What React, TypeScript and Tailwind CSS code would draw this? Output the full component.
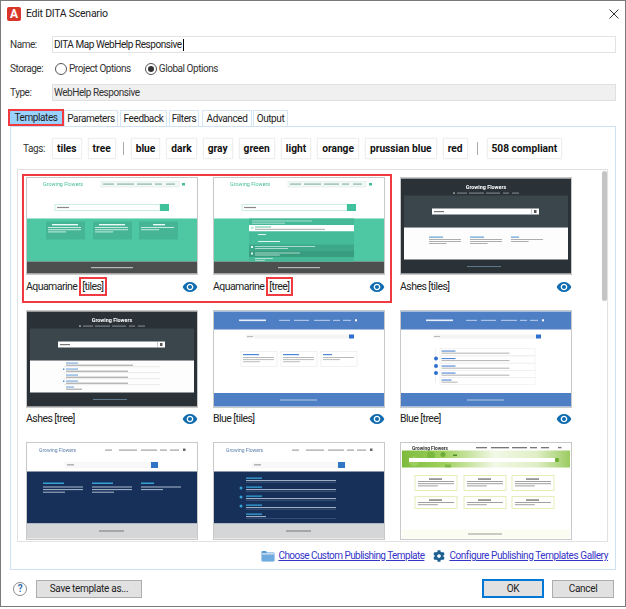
import React from 'react';
import { FaCog } from 'react-icons/fa';
import { MdVisibility } from 'react-icons/md';

const FONT = 'Roboto, "Noto Sans", sans-serif';

// tiny text lines of a page preview
function Lines({ x, y, w, n, fill, step = 2.6, o = 0.8 }: { x: number; y: number; w: number; n: number; fill: string; step?: number; o?: number }) {
  return (
    <>
      {Array.from({ length: n }).map((_, i) => (
        <rect key={i} x={x} y={y + i * step} width={i === n - 1 && n > 1 ? w * 0.55 : w} height={1} fill={fill} opacity={o} />
      ))}
    </>
  );
}

function Logo({ x, y, fill, anchor = 'start', bold = false, size = 5.4 }: { x: number; y: number; fill: string; anchor?: 'start' | 'middle'; bold?: boolean; size?: number }) {
  return (
    <text x={x} y={y} fill={fill} fontSize={size} fontWeight={bold ? 700 : 400} textAnchor={anchor} fontFamily={FONT}>
      Growing Flowers
    </text>
  );
}

function NavDots({ xs, y, fill, o = 0.7 }: { xs: [number, number][]; y: number; fill: string; o?: number }) {
  return (
    <>
      {xs.map(([x, w], i) => (
        <rect key={i} x={x} y={y} width={w} height={1.2} fill={fill} opacity={o} />
      ))}
    </>
  );
}

const NAV_A: [number, number][] = [[76, 11], [90, 17], [110, 15], [128, 7], [139, 9]];
const NAV_P: [number, number][] = [[78, 7], [92, 18], [114, 16], [133, 7], [143, 9]];

function Aqua({ tree }: { tree?: boolean }) {
  return (
    <>
      <rect width="170" height="95" fill="#fff" />
      <Logo x={16} y={7.5} fill="#45bd98" />
      <rect x="74" y="3" width="78" height="5.5" fill="#f2f8f6" stroke="#cfe0da" strokeWidth="0.4" />
      <NavDots xs={NAV_A} y={5} fill="#5f9a88" />
      <rect x="155" y="4.5" width="3" height="2.5" fill="#45bd98" />
      <rect x="28" y="26" width="105" height="6" fill="#fff" stroke="#bfe9db" strokeWidth="0.8" />
      <rect x="30" y="28.4" width="12" height="1.2" fill="#888" />
      <rect x="133" y="25.5" width="9" height="7" fill="#3fc29b" />
      <rect y="40" width="170" height="43" fill="#4dc8a3" />
      <rect y="83" width="170" height="12" fill="#4c4f4e" />
      <rect x="64" y="88.5" width="42" height="1.2" fill="#cfd8d5" opacity="0.8" />
      {tree ? (
        <>
          <rect x="35" y="40" width="105" height="43" fill="#46b998" />
          <Lines x={38} y={42} w={60} n={2} fill="#d8f2e9" step={2.2} o={0.7} />
          <rect x="35" y="46.5" width="105" height="6.5" fill="#fff" />
          <rect x="37" y="48" width="2.5" height="2.5" fill="#bfe9db" />
          <rect x="41" y="48" width="16" height="1" fill="#5fc7a8" />
          <rect x="41" y="50.3" width="70" height="1" fill="#888" opacity="0.7" />
          <rect x="35" y="53" width="105" height="7" fill="#45bb99" />
          <rect x="44" y="55.5" width="8" height="1" fill="#e0f5ee" />
          <rect x="35" y="60" width="105" height="6.5" fill="#45bb99" />
          <rect x="44" y="62.5" width="22" height="1" fill="#e0f5ee" />
          <rect x="35" y="66" width="105" height="6.5" fill="#3ea98a" />
          <rect x="37" y="67.5" width="2" height="2" fill="#e0f5ee" />
          <Lines x={41} y={67.5} w={60} n={2} fill="#d8f2e9" step={2} o={0.7} />
          <rect x="35" y="72.5" width="105" height="6" fill="#389c7f" />
          <rect x="37" y="74" width="2" height="2" fill="#e0f5ee" />
          <Lines x={41} y={74} w={45} n={2} fill="#d8f2e9" step={2} o={0.7} />
          <Lines x={41} y={79.5} w={18} n={2} fill="#d8f2e9" step={1.8} o={0.7} />
        </>
      ) : (
        [19, 66, 112].map((x, i) => (
          <g key={x}>
            <rect x={x} y="43" width="39" height="18" fill="#45b595" />
            <rect x={x + 6 + (i === 2 ? 8 : 0)} y="45.5" width={i === 2 ? 12 : 26} height="1.4" fill="#eafaf5" />
            <Lines x={x + 2} y={48.5} w={33} n={i === 2 ? 2 : 3} fill="#e6f7f1" step={2.2} />
          </g>
        ))
      )}
    </>
  );
}

function Ashes({ tree }: { tree?: boolean }) {
  return (
    <>
      <rect width="170" height="95" fill="#2a3238" />
      <Logo x={85} y={10} fill="#fff" anchor="middle" bold />
      <rect x="52" y="14" width="2" height="1.2" fill="#bbb" />
      <NavDots xs={[[56, 10], [68, 15], [85, 14], [102, 6], [111, 7]]} y={14} fill="#aeb6bb" o={0.6} />
      <rect x="3" y="17" width="164" height="32" fill="#3a454c" />
      <rect x="31" y="30" width="107" height="6" fill="#fff" />
      <rect x="33" y="32.5" width="10" height="1.2" fill="#777" />
      <rect x="130" y="30" width="0.5" height="6" fill="#999" />
      <rect x="133" y="31.5" width="2.5" height="3" fill="#555" />
      <rect x="3" y="49" width="164" height="32" fill="#fdfdfd" />
      <rect x="66" y="87.5" width="34" height="1" fill="#6a8aa0" opacity="0.8" />
      {tree ? (
        <>
          {[51, 57, 63, 69, 75].map((y, i) => (
            <g key={y}>
              <rect x="39" y={y} width={i === 4 ? 8 : 12} height="1.1" fill="#70a5d8" />
              <rect x="39" y={y + 2.2} width={i === 4 ? 16 : 62 + (i === 0 ? 5 : 0)} height="1" fill="#999" />
              {i < 4 && <rect x="37" y={y + 4} width="96" height="0.6" fill="#ddd" />}
              {(i === 1 || i === 3) && <rect x="36" y={y} width="1.4" height="1.4" fill="#3d85c6" />}
            </g>
          ))}
        </>
      ) : (
        [28, 69, 110].map((x, i) => (
          <g key={x}>
            <rect x={x} y="58" width={i === 2 ? 8 : 14} height="1.3" fill="#70a5d8" />
            <Lines x={x} y={60.5} w={32} n={i === 2 ? 2 : 3} fill="#999" step={2} />
          </g>
        ))
      )}
    </>
  );
}

function Blue({ tree }: { tree?: boolean }) {
  return (
    <>
      <rect width="170" height="95" fill="#fff" />
      <rect width="170" height="18" fill="#4e7fc4" />
      <rect y="81.5" width="170" height="13.5" fill="#4e7fc4" />
      <rect x="25" y="8" width="27" height="1.6" fill="#e6eefa" />
      <NavDots xs={[[65, 11], [80, 15], [100, 16], [119, 7], [129, 8]]} y={8.3} fill="#d0def3" />
      <rect x="141" y="7.8" width="2" height="2" fill="#fff" />
      <rect x="32" y="23" width="105" height="4" fill="#f4f4f4" />
      <rect x="33" y="24.5" width="6" height="1" fill="#bbb" />
      <rect x="135" y="23" width="5" height="4" fill="#2f6fd0" />
      <rect x="66" y="88" width="37" height="1" fill="#d0def3" opacity="0.8" />
      {tree ? (
        <>
          <rect x="34" y="37" width="0.6" height="34" fill="#e4e4e4" />
          {[37, 44.5, 52, 59, 66].map((y, i) => (
            <g key={y}>
              <rect x="39" y={y} width="95" height="7" fill="#fff" stroke="#e8e8e8" strokeWidth="0.5" />
              <rect x="40.5" y={y + 2} width={i === 4 ? 10 : 14} height="1.1" fill="#4f86d8" />
              <rect x="40.5" y={y + 4.2} width={i === 4 ? 16 : 68} height="0.9" fill="#aaa" />
              {(i === 1 || i === 3) && <circle cx="35" cy={y + 2.5} r="2" fill="#2f6fd0" />}
            </g>
          ))}
          <circle cx="35" cy="54.5" r="2" fill="#2f6fd0" />
        </>
      ) : (
        [27, 67, 107].map((x, i) => (
          <g key={x}>
            <rect x={x} y="40" width="36" height="15" fill="#fff" stroke="#e8e8e8" strokeWidth="0.6" />
            <rect x={x + 2} y="42.5" width={i === 2 ? 9 : 16} height="1.2" fill="#4f86d8" />
            <Lines x={x + 2} y={45.5} w={31} n={i === 2 ? 2 : 3} fill="#aaa" step={2.1} />
          </g>
        ))
      )}
    </>
  );
}

function Prussian({ tree }: { tree?: boolean }) {
  return (
    <>
      <rect width="170" height="95" fill="#fff" />
      <Logo x={12} y={8.5} fill="#5f80ad" size={5} />
      <NavDots xs={NAV_P} y={6} fill="#777" />
      <rect x="156" y="5" width="2.5" height="2.5" fill="#666" />
      <rect x="38" y="19" width="87" height="5" fill="#f8f8f8" stroke="#eee" strokeWidth="0.4" />
      <rect x="40" y="20.8" width="7" height="1.1" fill="#999" />
      <rect x="124" y="18.5" width="7" height="6" fill="#2f77c4" />
      <rect y="28" width="170" height="52" fill="#16305a" />
      <rect y="80" width="170" height="15" fill="#d5d6d8" />
      <rect x="72" y="87" width="25" height="1" fill="#777" />
      {tree ? (
        <>
          {[34, 43, 52, 61, 70].map((y, i) => (
            <g key={y}>
              <rect x="32" y={y} width="16" height="1.3" fill="#35a2d6" />
              <rect x="32" y={y + 2.5} width={i === 4 ? 20 : 90} height="1.1" fill="#c5d0de" opacity="0.8" />
              <rect x="32" y={y + 5} width="90" height="0.5" fill="#51688a" />
              {i > 0 && i < 4 && <circle cx="27" cy={y + 1.5} r="1.5" fill="#35a2d6" />}
            </g>
          ))}
        </>
      ) : (
        [16, 65, 114].map((x, i) => (
          <g key={x}>
            <rect x={x} y="39" width={i === 2 ? 13 : 21} height="1.5" fill="#35a2d6" />
            <Lines x={x} y={43} w={40} n={i === 2 ? 2 : 3} fill="#d5dde8" step={2.6} />
          </g>
        ))
      )}
    </>
  );
}

function Green() {
  return (
    <>
      <defs>
        <linearGradient id="band" x1="0" x2="1" y1="0" y2="0">
          <stop offset="0" stopColor="#7dbb3c" />
          <stop offset="0.25" stopColor="#9fd05e" />
          <stop offset="0.55" stopColor="#f2f8e6" />
          <stop offset="0.8" stopColor="#e0efc6" />
          <stop offset="1" stopColor="#9ccb62" />
        </linearGradient>
      </defs>
      <rect width="170" height="95" fill="#fff" />
      <Logo x={11} y={6} fill="#333" bold size={4.8} />
      <NavDots xs={[[75, 11], [90, 18], [111, 15], [129, 7], [140, 8]]} y={3.6} fill="#444" o={0.8} />
      <rect x="157" y="3.4" width="3.5" height="1.4" fill="#777" />
      <rect x="1" y="7" width="168" height="17" fill="url(#band)" />
      <circle cx="30" cy="12" r="4" fill="#5fa52c" opacity="0.5" />
      <circle cx="42" cy="11" r="2.5" fill="#4d9424" opacity="0.6" />
      <circle cx="13" cy="18" r="5" fill="#a8d670" opacity="0.6" />
      <rect x="52" y="11" width="4" height="1.5" fill="#4d8c24" />
      <rect x="8" y="14.5" width="146" height="4" fill="#fff" />
      <circle cx="156" cy="16.5" r="2.2" fill="#6fae35" />
      <rect x="44" y="21" width="6" height="3" fill="#6fae35" opacity="0.7" />
      <rect x="1" y="86" width="168" height="9" fill="#fbfdf3" />
      <rect x="67" y="90" width="34" height="1" fill="#999" />
      {[[14, 32, 15], [63, 32, 15], [111, 32, 15], [14, 53, 12], [63, 53, 12], [111, 53, 12]].map(([x, y, h], i) => (
        <g key={i}>
          <rect x={x} y={y} width="42" height={h} fill="#fff" stroke="#dfe9a8" strokeWidth="0.8" />
          <rect x={x + 14} y={y + 3} width="13" height="1.1" fill="#555" />
          <Lines x={x + 3} y={y + 5.5} w={36} n={h > 12 ? 3 : 2} fill="#888" step={2.2} />
        </g>
      ))}
    </>
  );
}

function Thumb({ children }: { children: React.ReactNode }) {
  return (
    <div className="h-[96px] w-[170px] overflow-hidden outline outline-1 outline-[#c9c9c9]">
      <svg viewBox="0 0 170 95" className="block h-[96px] w-[170px] blur-[0.5px]">
        {children}
      </svg>
    </div>
  );
}

function Card({ name, tag, boxed, children, eye = true }: { name: string; tag: string; boxed?: boolean; children: React.ReactNode; eye?: boolean }) {
  return (
    <div className="w-[170px]">
      <Thumb>{children}</Thumb>
      {eye && (
        <div className="mt-[4px] flex h-[17px] items-center justify-between -ml-[1px]">
          <span className="whitespace-nowrap text-[10.5px] tracking-[-0.55px] text-[#222]">
            {name}{' '}
            {boxed ? <span className="border-2 border-[#f03a3f] px-[1px] py-[1px]">{tag}</span> : tag}
          </span>
          <MdVisibility className="mr-[-1px] text-[16px] text-[#0f6cb0]" />
        </div>
      )}
    </div>
  );
}

function Chip({ children }: { children: string }) {
  return (
    <div className="flex h-[21px] items-center whitespace-nowrap border border-[#efefef] px-[4px] text-[10.2px] font-bold text-[#111] shadow-[0_0_1px_#e5e5e5]">
      {children}
    </div>
  );
}

function Tab({ label, className }: { label: string; className: string }) {
  return (
    <div className={`${className} flex h-[16px] items-center justify-center border border-b-0 border-[#d6e6f5] bg-white text-[10px] tracking-[-0.4px] text-[#222]`}>
      {label}
    </div>
  );
}

function FolderIcon() {
  return (
    <svg width="14" height="12" viewBox="0 0 14 12">
      <path d="M0.5 2 Q0.5 1 1.5 1 H5 L6 2.5 H12.5 Q13.5 2.5 13.5 3.5 V10.5 Q13.5 11.5 12.5 11.5 H1.5 Q0.5 11.5 0.5 10.5 Z" fill="#5b9bd5" />
      <rect x="1" y="3.2" width="12" height="1.4" fill="#d6e8f7" />
      <rect x="1" y="5" width="12" height="6" fill="#6fabdf" />
    </svg>
  );
}

export default function App() {
  return (
    <div className="h-[609px] w-[626px] overflow-hidden bg-white" style={{ fontFamily: FONT }}>
      <div className="flex h-[607px] flex-col border border-[#7a7a7a] bg-white">
        {/* title bar */}
        <div className="flex h-[25px] shrink-0 items-center pl-[6px] pr-[4px]">
          <div className="flex h-[14px] w-[14px] items-center justify-center rounded-[2px] bg-[#d9362b] text-[12px] font-bold leading-none text-white">
            A
          </div>
          <span className="ml-[5px] text-[10.5px] tracking-[-0.25px] text-[#222]">Edit DITA Scenario</span>
          <svg className="ml-auto" width="10" height="10" viewBox="0 0 10 10" stroke="#333" strokeWidth="1" fill="none">
            <path d="M0.5 0.5 L9.5 9.5 M9.5 0.5 L0.5 9.5" />
          </svg>
          <span className="w-[2px]" />
        </div>

        {/* form rows */}
        <div className="flex flex-col pl-[9px] pr-[9px] text-[10px] tracking-[-0.45px] text-[#333]">
          <div className="mt-[10px] flex h-[17px] items-center">
            <span className="w-[42px]">Name:</span>
            <div className="flex h-[17px] flex-1 items-center border border-[#e3e3e3] pl-[1px] text-[#222]">
              DITA Map WebHelp Responsive
              <span className="ml-px h-[12px] w-px bg-black" />
            </div>
          </div>
          <div className="mt-[7px] flex h-[17px] items-center">
            <span className="w-[45px]">Storage:</span>
            <span className="h-[12px] w-[12px] rounded-full border border-[#555]" />
            <span className="ml-[2px]">Project Options</span>
            <span className="ml-[14px] flex h-[12px] w-[12px] items-center justify-center rounded-full border border-[#555]">
              <span className="h-[6px] w-[6px] rounded-full bg-[#333]" />
            </span>
            <span className="ml-[2px]">Global Options</span>
          </div>
          <div className="mt-[7px] flex h-[17px] items-center">
            <span className="w-[42px]">Type:</span>
            <div className="flex h-[17px] flex-1 items-center border border-[#e0e0e0] bg-[#f0f0f0] pl-[1px]">WebHelp Responsive</div>
          </div>
        </div>

        {/* tabs */}
        <div className="mt-[8px] flex items-end pl-[7px]">
          <div className="flex h-[17px] w-[56px] items-center justify-center border-2 border-[#f03a3f] bg-[#99d1ff] text-[10px] tracking-[-0.4px] text-[#222]">
            Templates
          </div>
          <Tab label="Parameters" className="w-[54px]" />
          <Tab label="Feedback" className="ml-[2px] w-[47px]" />
          <Tab label="Filters" className="ml-[2px] w-[30px]" />
          <Tab label="Advanced" className="ml-[3px] w-[50px]" />
          <Tab label="Output" className="ml-[1px] w-[35px]" />
        </div>

        {/* templates panel */}
        <div className="ml-[9px] mr-[9px] flex h-[444px] flex-col border border-[#cfe2f3]">
          <div className="mt-[11px] flex items-center gap-[6px] pl-[12px]">
            <span className="w-[23px] text-[10px] tracking-[-0.4px] text-[#333]">Tags:</span>
            <Chip>tiles</Chip>
            <Chip>tree</Chip>
            <div className="mx-[1px] h-[13px] w-px bg-[#aaa]" />
            <Chip>blue</Chip>
            <Chip>dark</Chip>
            <Chip>gray</Chip>
            <Chip>green</Chip>
            <Chip>light</Chip>
            <Chip>orange</Chip>
            <Chip>prussian blue</Chip>
            <Chip>red</Chip>
            <div className="mx-[3px] h-[13px] w-px bg-[#aaa]" />
            <Chip>508 compliant</Chip>
          </div>

          <div className="relative ml-[6px] mr-[7px] mt-[10px] h-[373px] overflow-hidden border border-[#e2e2e2]">
            <div className="grid auto-rows-[132.5px] grid-cols-[187px_187px_170px] pl-[9px] pt-[8px]">
              <Card name="Aquamarine" tag="[tiles]" boxed><Aqua /></Card>
              <Card name="Aquamarine" tag="[tree]" boxed><Aqua tree /></Card>
              <Card name="Ashes" tag="[tiles]"><Ashes /></Card>
              <Card name="Ashes" tag="[tree]"><Ashes tree /></Card>
              <Card name="Blue" tag="[tiles]"><Blue /></Card>
              <Card name="Blue" tag="[tree]"><Blue tree /></Card>
              <Card name="" tag="" eye={false}><Prussian /></Card>
              <Card name="" tag="" eye={false}><Prussian tree /></Card>
              <Card name="" tag="" eye={false}><Green /></Card>
            </div>
            {/* red highlight round the two aquamarine cards */}
            <div className="absolute left-[4px] top-[4px] h-[129px] w-[370px] border-2 border-[#f03a3f]" />
            {/* scrollbar */}
            <div className="absolute right-[0px] top-[1px] h-[130px] w-[5px] rounded-full bg-[#c4c4c4]" />
          </div>

          <div className="mt-[6px] flex items-center justify-end gap-[3px] pr-[7px] text-[10px] tracking-[-0.42px] text-[#3434c8]">
            <FolderIcon />
            <span className="tracking-[-0.55px] underline">Choose Custom Publishing Template</span>
            <FaCog className="ml-[6px] mr-[1px] text-[12px] text-[#1d5f90]" />
            <span className="underline">Configure Publishing Templates Gallery</span>
          </div>
        </div>

        {/* bottom buttons */}
        <div className="mt-[9px] flex items-center pl-[12px] pr-[11px] text-[10px] tracking-[-0.3px] text-[#222]">
          <div className="flex h-[14px] w-[14px] items-center justify-center rounded-full border border-[#8a8a8a] text-[10px] font-bold text-[#3a6fb0]">?</div>
          <div className="ml-[9px] flex h-[18px] w-[106px] items-center justify-center whitespace-nowrap border border-[#adadad] bg-[#e1e1e1]">Save template as...</div>
          <div className="ml-auto flex h-[19px] w-[62px] items-center justify-center border-2 border-[#0078d7] bg-[#e1e1e1]">OK</div>
          <div className="ml-[8px] flex h-[18px] w-[62px] items-center justify-center border border-[#adadad] bg-[#e1e1e1]">Cancel</div>
        </div>
      </div>
    </div>
  );
}
